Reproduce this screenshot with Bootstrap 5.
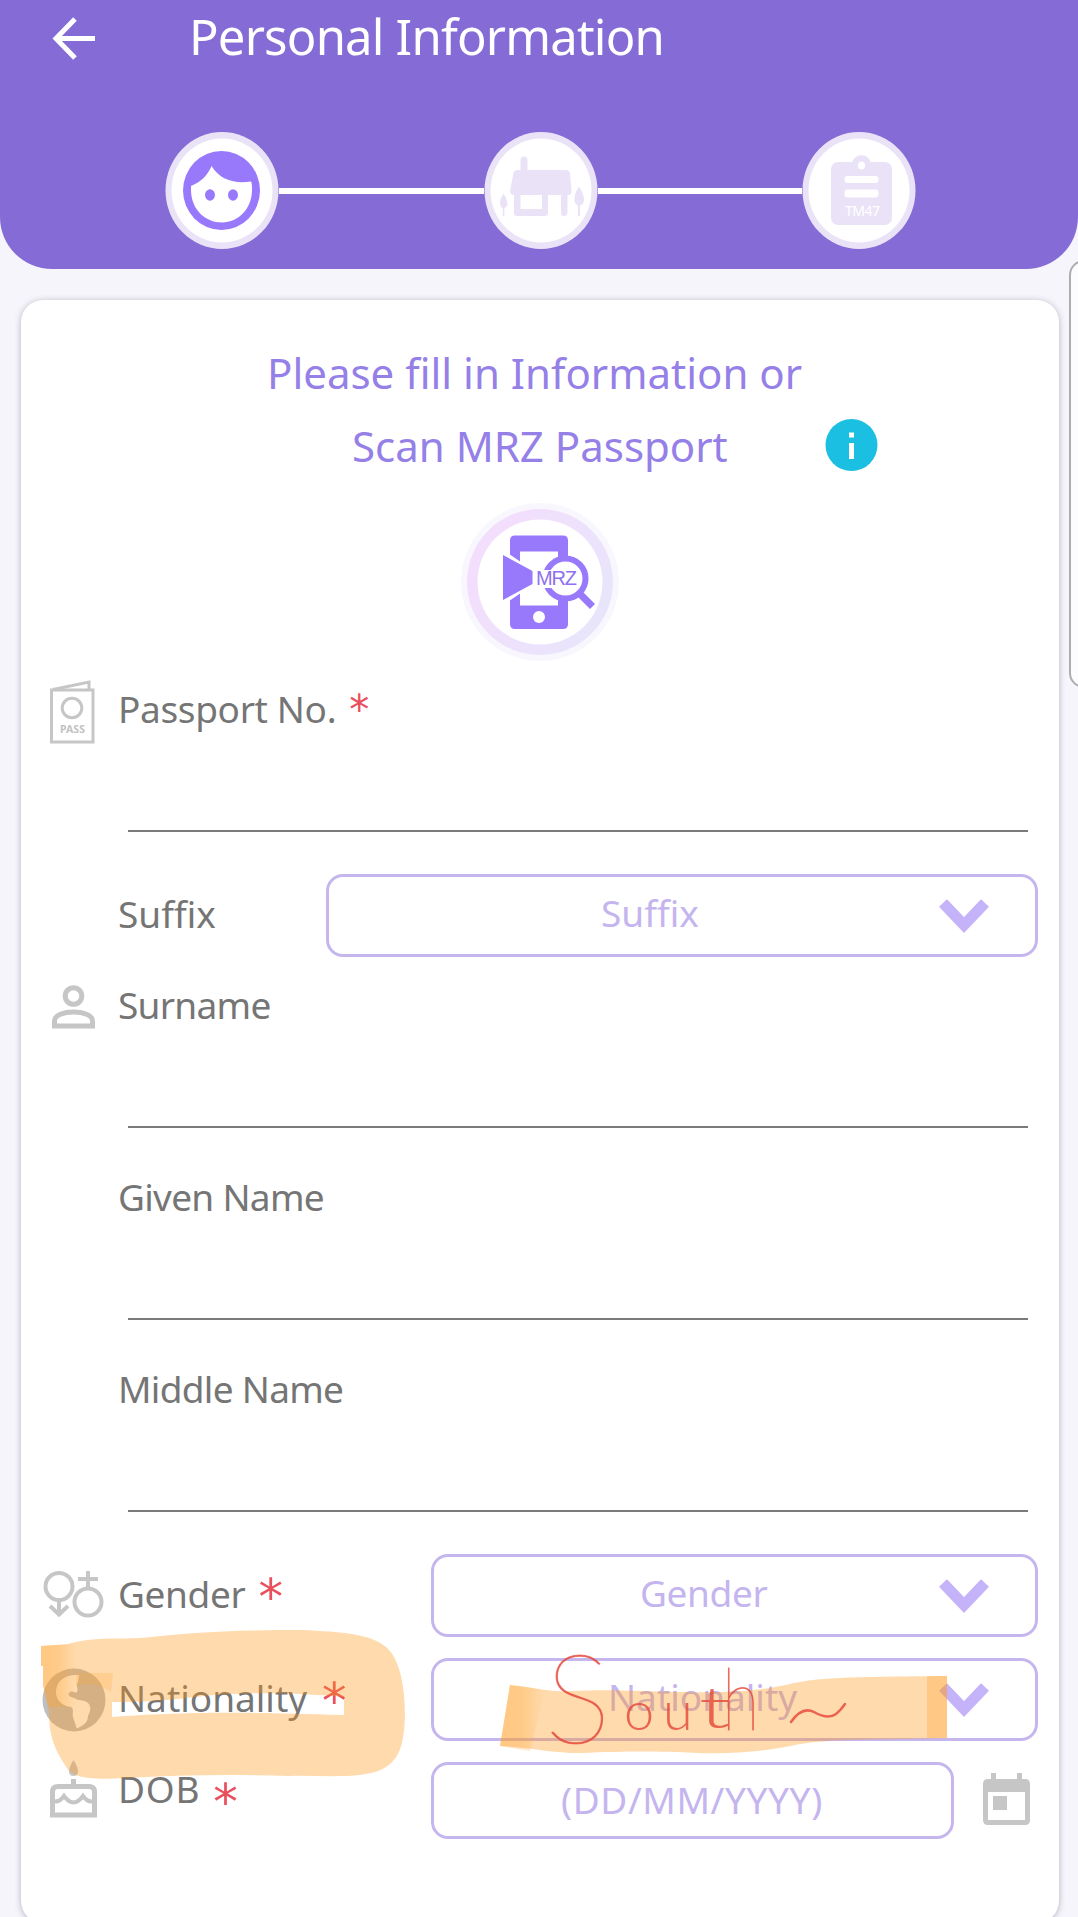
<!DOCTYPE html>
<html lang="en">
<head>
<meta charset="utf-8">
<meta name="viewport" content="width=device-width, initial-scale=1">
<title>Personal Information</title>
<link href="https://cdn.jsdelivr.net/npm/bootstrap@5.3.0/dist/css/bootstrap.min.css" rel="stylesheet">
<style>
html,body{height:1917px;overflow:hidden}
body{background:#f6f5fb;font-family:"Noto Sans","Open Sans",sans-serif;font-size:37px;line-height:50px;color:#757575}
.app-head{height:269px;background:#856bd6;border-radius:0 0 52px 52px;color:#fff}
.title-bar{height:75px;padding-left:49px}
.page-title{font-size:49px;line-height:75px;letter-spacing:-.8px;margin:-2px 0 0 90px;font-weight:400}
.steps{margin-top:57px;padding:0 162px 0 165px}
.step-line{height:6px;background:#fff;flex:1}
.form-card{margin:31px 19px 0 21px;height:1623px;border:0;border-radius:22px;padding:36px 21px 0 0;box-shadow:0 1px 6px rgba(60,50,80,.35)}
.intro{font-size:42px;line-height:73px;color:#9580e8}
.intro-one{padding-left:246px}
.intro-two{padding-left:331px;height:73px}
.info-dot{position:absolute;left:804px}
.scan{margin:21px 0 22px 440px;width:158px;height:158px}
.icon-col{width:97px;flex:none;position:relative}
.icon-col svg{display:block}
.field-row{height:149px;margin-bottom:43px}
.field-row .body-col{display:flex;flex-direction:column;justify-content:space-between}
.entry{height:2px;margin:0 10px;background:#7a7a7a}
.pick{height:83px;border:3px solid #c5b6ee;border-radius:17px;color:#c4b5ef;background:transparent;position:relative}
.pick svg{position:absolute;right:46px;top:22px}
.pick-text{line-height:71px}
.req{font-family:"DejaVu Sans",sans-serif;color:#e9505e;display:inline-block}
.snug{letter-spacing:-.7px}
.trim{letter-spacing:-.35px}
.ink{position:absolute;left:0;top:0;pointer-events:none}
.edge-panel{position:absolute;left:1069px;top:260px;width:30px;height:428px;border:2px solid #adadb0;border-radius:16px;background:#fcfcfe}
</style>
<script src="https://cdn.jsdelivr.net/npm/bootstrap@5.3.0/dist/js/bootstrap.bundle.min.js"></script>
</head>
<body class="position-relative">
<header class="app-head">
  <div class="title-bar d-flex align-items-center">
    <svg width="50" height="50" viewBox="0 0 50 50" fill="none" stroke="#fff" stroke-width="5"><path d="M46 25.500H8M26 6 7 25.500 26 45"/></svg>
    <h1 class="page-title">Personal Information</h1>
  </div>
  <div class="steps d-flex align-items-center">
    <svg width="114" height="117" viewBox="0 0 114 117"><ellipse cx="57" cy="58.500" rx="56.500" ry="58.500" fill="#eae3f8"/><ellipse cx="57" cy="58.500" rx="50.500" ry="52" fill="#fff"/><ellipse cx="56.500" cy="58.500" rx="38.500" ry="39.500" fill="#9879fb"/><path d="M26 54C36 50 43 43 46.500 34C55 48 70 52 86 49.500C87 51 87 55 87 58C87 76 74 90.500 57 90.500S26 77 26 58Z" fill="#fff"/><ellipse cx="45" cy="63" rx="5" ry="5.700" fill="#9879fb"/><ellipse cx="68" cy="63" rx="5" ry="5.700" fill="#9879fb"/></svg>
    <div class="step-line"></div>
    <svg width="114" height="117" viewBox="0 0 114 117"><ellipse cx="57" cy="58.500" rx="56.500" ry="58.500" fill="#eae3f8"/><ellipse cx="57" cy="58.500" rx="50.500" ry="52" fill="#fff"/><g fill="#eae3f8"><path d="M36.500 41V28a3.500 3.500 0 0 1 7 0V38H82q3 0 4 3L87.500 59q0 4-3 4H83.500V80q0 4-3.500 4T77 80V63H64V81q0 3-3 3H33q-3 0-3-3V63q-4 0-4-4L29.500 41q1-3 4-3h3ZM36.500 63V77H58V63Z" fill-rule="evenodd"/><path d="M19.500 61.500C14 70 16 75 18.800 76V84h1.600V76C24 75 25 70 19.500 61.500ZM95 54.500C88 65 90 72 94 73.500V84h2V73.500C101 72 102 65 95 54.500Z"/></g></svg>
    <div class="step-line"></div>
    <svg width="114" height="117" viewBox="0 0 114 117"><ellipse cx="57" cy="58.500" rx="56.500" ry="58.500" fill="#eae3f8"/><ellipse cx="57" cy="58.500" rx="50.500" ry="52" fill="#fff"/><rect x="29" y="30" width="61" height="63" rx="7" fill="#eae3f8"/><circle cx="59.500" cy="32.500" r="9.500" fill="#eae3f8"/><ellipse cx="59.500" cy="33.500" rx="3.500" ry="4" fill="#fff"/><rect x="42.500" y="44" width="34" height="7" rx="3" fill="#fff"/><rect x="42.500" y="57.500" width="34" height="8" rx="3" fill="#fff"/><text x="43" y="84" font-size="14" textLength="35" fill="#fff" font-family="Noto Sans">TM47</text></svg>
  </div>
</header>

<main class="card form-card">
  <div class="intro">
    <div class="intro-one">Please fill in Information or</div>
    <div class="intro-two d-flex align-items-center"><span>Scan MRZ Passport</span>
      <svg class="info-dot" width="53" height="53" viewBox="0 0 53 53"><circle cx="26.500" cy="26" r="26" fill="#1bbfe2"/><path d="M24 13.500h5v5h-5zM24 24h5v16h-5z" fill="#fff"/></svg></div>
  </div>
  <div class="scan"><svg width="158" height="158" viewBox="0 0 158 158">
    <defs><linearGradient id="halo" x1="0" y1="0" x2="1" y2=".6"><stop offset="0" stop-color="#f6dcfd"/><stop offset="1" stop-color="#e8e5fb"/></linearGradient></defs>
    <circle cx="79" cy="79" r="79" fill="#f9f7fe"/><circle cx="79" cy="79" r="73" fill="url(#halo)"/><circle cx="79" cy="79" r="62.500" fill="#fff"/>
    <path d="M54 32.500H102q5 0 5 5V121q0 5-5 5H54q-5 0-5-5V37.500q0-5 5-5ZM59 48.500V102.500H97V48.500Z" fill="#9879fb" fill-rule="evenodd"/>
    <path d="M38 44 76 70V79L38 105Z" fill="#fff"/><path d="M42 52 71.500 68V81L42 97Z" fill="#9879fb"/>
    <circle cx="78" cy="114" r="6" fill="#fff"/><circle cx="104.500" cy="75.500" r="20" fill="#fff" stroke="#9879fb" stroke-width="6"/><path d="m118 90 13.500 13.500" stroke="#9879fb" stroke-width="7"/>
    <path d="M74 67H92V85H74Z" fill="#fff"/><text x="75" y="82" font-family="Liberation Sans" font-size="20" textLength="41" fill="#8f70ef">MRZ</text></svg></div>

  <div class="field-row d-flex" style="margin-bottom:42px">
    <div class="icon-col"><svg style="margin:-5px 0 0 27px" width="50" height="66" viewBox="0 0 50 66" fill="none" stroke="#c6c6c6" stroke-width="3"><rect x="3.500" y="12" width="41.500" height="52"/><path d="M5 11.500 41 4V12" /><circle cx="24" cy="30" r="9.800"/><text x="12" y="55" font-size="10.500" font-weight="700" textLength="25" fill="#c2c2c2" stroke="none" font-family="Noto Sans">PASS</text></svg></div>
    <div class="body-col flex-fill"><div class="d-flex"><span class="trim" style="padding-top:1px">Passport No.</span><span class="req" style="font-size:40px;margin-left:13px;padding-top:2px">*</span></div><div class="entry"></div></div>
  </div>
  <div class="d-flex" style="margin-bottom:22px">
    <div class="icon-col"></div><div style="width:208px;padding-top:15px">Suffix</div>
    <div class="pick flex-fill"><div class="pick-text" style="padding-left:272px">Suffix</div><svg width="50" height="34" viewBox="0 0 50 34" fill="none" stroke="#c5b3fa" stroke-width="11"><path d="m4 4 21 22L46 4"/></svg></div>
  </div>
  <div class="field-row d-flex">
    <div class="icon-col"><svg style="margin:6px 0 0 31px" width="43" height="44" viewBox="0 0 43 44" fill="none" stroke="#c6c6c6" stroke-width="5"><circle cx="21.500" cy="11" r="8.300"/><path d="M2.500 41V36C2.500 30 12 27 21.500 27S40.500 30 40.500 36V41Z"/></svg></div>
    <div class="body-col flex-fill"><span class="snug" style="padding-top:1px">Surname</span><div class="entry"></div></div>
  </div>
  <div class="field-row d-flex"><div class="icon-col"></div><div class="body-col flex-fill"><span class="snug" style="padding-top:1px">Given Name</span><div class="entry"></div></div></div>
  <div class="field-row d-flex" style="margin-bottom:42px"><div class="icon-col"></div><div class="body-col flex-fill"><span class="snug" style="padding-top:1px">Middle Name</span><div class="entry"></div></div></div>

  <div class="d-flex" style="margin-bottom:21px">
    <div class="icon-col"><svg style="margin:16px 0 0 22px" width="62" height="50" viewBox="0 0 62 50" fill="none" stroke="#c6c6c6" stroke-width="4"><circle cx="16" cy="16.500" r="13.500"/><path d="M16 30V44M7 36l9 8.500L25 36M45 1V18M35 9H55"/><circle cx="45" cy="32" r="13.500"/></svg></div>
    <div class="d-flex" style="width:313px;padding-top:15px"><span class="trim">Gender</span><span class="req" style="font-size:49px;margin-left:13px;padding-top:4px">*</span></div>
    <div class="pick flex-fill"><div class="trim pick-text" style="padding-left:206px">Gender</div><svg width="50" height="34" viewBox="0 0 50 34" fill="none" stroke="#c5b3fa" stroke-width="11"><path d="m4 4 21 22L46 4"/></svg></div>
  </div>
  <div class="d-flex" style="margin-bottom:21px">
    <div class="icon-col"><svg style="margin:10px 0 0 21px" width="64" height="64" viewBox="0 0 64 64"><circle cx="32" cy="32" r="31.500" fill="#bfbfc0"/><path d="M37 7C24 6 14 12 14 24C14 33 21 38 29 39C33 41 29 46 32 52C34 57 34 61 36 60C42 57 46 54 46 48C48 44 50 39 46 35C41 31 36 33 34 31C31 29 25 29 27 25C30 21 33 26 35 24C37 20 33 17 36 14Z" fill="#fff"/></svg></div>
    <div class="d-flex" style="width:313px;padding-top:15px"><span>Nationality</span><span class="req" style="font-size:49px;margin-left:15px;padding-top:4px">*</span></div>
    <div class="pick flex-fill"><div class="pick-text" style="padding-left:174px">Nationality</div><svg width="50" height="34" viewBox="0 0 50 34" fill="none" stroke="#c5b3fa" stroke-width="11"><path d="m4 4 21 22L46 4"/></svg></div>
  </div>
  <div class="d-flex">
    <div class="icon-col"><svg style="margin:-2px 0 0 28px" width="50" height="60" viewBox="0 0 50 60" fill="none" stroke="#c6c6c6" stroke-width="5"><path d="M24.500 0C18 10 19 16 24.500 16S31 10 24.500 0Z" fill="#c6c6c6" stroke="none"/><path d="M24.500 19v8M3.500 55V32Q3.500 26.500 9 26.500H40Q45.500 26.500 45.500 32V55Z"/><path d="M4 41Q10 43 15 36Q24.500 49 34 36Q39 43 45 41" stroke-width="4"/></svg></div>
    <div class="d-flex" style="width:313px;padding-top:2px"><span style="letter-spacing:.8px">DOB</span><span class="req" style="font-size:49px;margin-left:13px;padding-top:14px">*</span></div>
    <div class="pick" style="width:523px;height:77px"><div class="pick-text" style="padding-left:127px;line-height:69px;letter-spacing:.6px">(DD/MM/YYYY)</div></div>
    <svg style="margin:11px 0 0 29px" width="47" height="53" viewBox="0 0 47 53"><path d="M8 0h5v6H34V0h5v6h3q5 0 5 5V47q0 5-5 5H5q-5 0-5-5V11q0-5 5-5H8ZM5 19V47H42V19Z" fill="#c6c6c6" fill-rule="evenodd"/><rect x="10" y="23" width="14" height="14" fill="#c6c6c6"/></svg>
  </div>
</main>

<div class="edge-panel"></div>
<svg class="ink" width="1078" height="1917" viewBox="0 0 1078 1917">
  <defs><linearGradient id="mk" x1="0" x2="1"><stop offset="0" stop-color="#ffa32a" stop-opacity=".32"/><stop offset=".5" stop-color="#ffa32a" stop-opacity=".28"/><stop offset="1" stop-color="#ffa32a" stop-opacity="0"/></linearGradient></defs>
  <path d="M41 1646L68 1644C90 1637 120 1639 141 1638C200 1631 250 1630 302 1630C340 1632 375 1633 390 1651C401 1665 405 1690 405 1715C404 1740 402 1762 378 1771C355 1779 320 1775 290 1776C230 1774 180 1775 125 1778C90 1780 73 1778 67 1768C55 1750 49 1737 49 1712L43 1685V1666H41ZM112 1702V1717C170 1713 220 1711 344 1715V1697C280 1691 230 1693 195 1697C165 1701 140 1702 112 1702Z" fill="#ff9514" fill-opacity=".35" fill-rule="evenodd"/>
  <path d="M41 1646L76 1644V1707H49L43 1685V1666H41Z" fill="url(#mk)"/><path d="M76 1673H113L111 1692Q94 1680 76 1686Z" fill="#ffa32a" fill-opacity=".22"/>
  <path d="M510 1685C535 1687 545 1692 570 1691C610 1689 640 1691 680 1692C730 1693 760 1691 790 1684C820 1677 850 1677 947 1676V1738C890 1740 840 1738 800 1744C765 1752 730 1754 700 1753C655 1751 630 1751 580 1753C550 1753 530 1747 500 1746Z" fill="#ff9514" fill-opacity=".35"/>
  <path d="M510 1685 545 1690 530 1751 500 1746Z" fill="url(#mk)"/><path d="M927 1676H947V1738H927Z" fill="#ffa32a" fill-opacity=".3"/>
  <g fill="#e5483b" fill-opacity=".82" font-family="Lato" font-weight="300">
    <text font-size="124" font-weight="100" stroke="#e5483b" stroke-opacity=".6" stroke-width="1" transform="translate(545 1799) translate(0 -56)">S</text>
    <text x="624" y="1730" font-size="54">o</text><text x="663" y="1730" font-size="54">u</text>
    <text font-size="54" transform="translate(699 1728) scale(1.700 1.050)">t</text><text font-size="86" font-weight="100" stroke="#e5483b" stroke-opacity=".6" stroke-width="1" transform="translate(722 1730) scale(.8 1)">h</text>
  </g>
  <path d="M791 1722Q802 1706 814 1712Q828 1720 836 1714Q841 1710 845 1704" fill="none" stroke="#e5483b" stroke-opacity=".82" stroke-width="2.500" stroke-linecap="round"/>
</svg>
</body>
</html>
